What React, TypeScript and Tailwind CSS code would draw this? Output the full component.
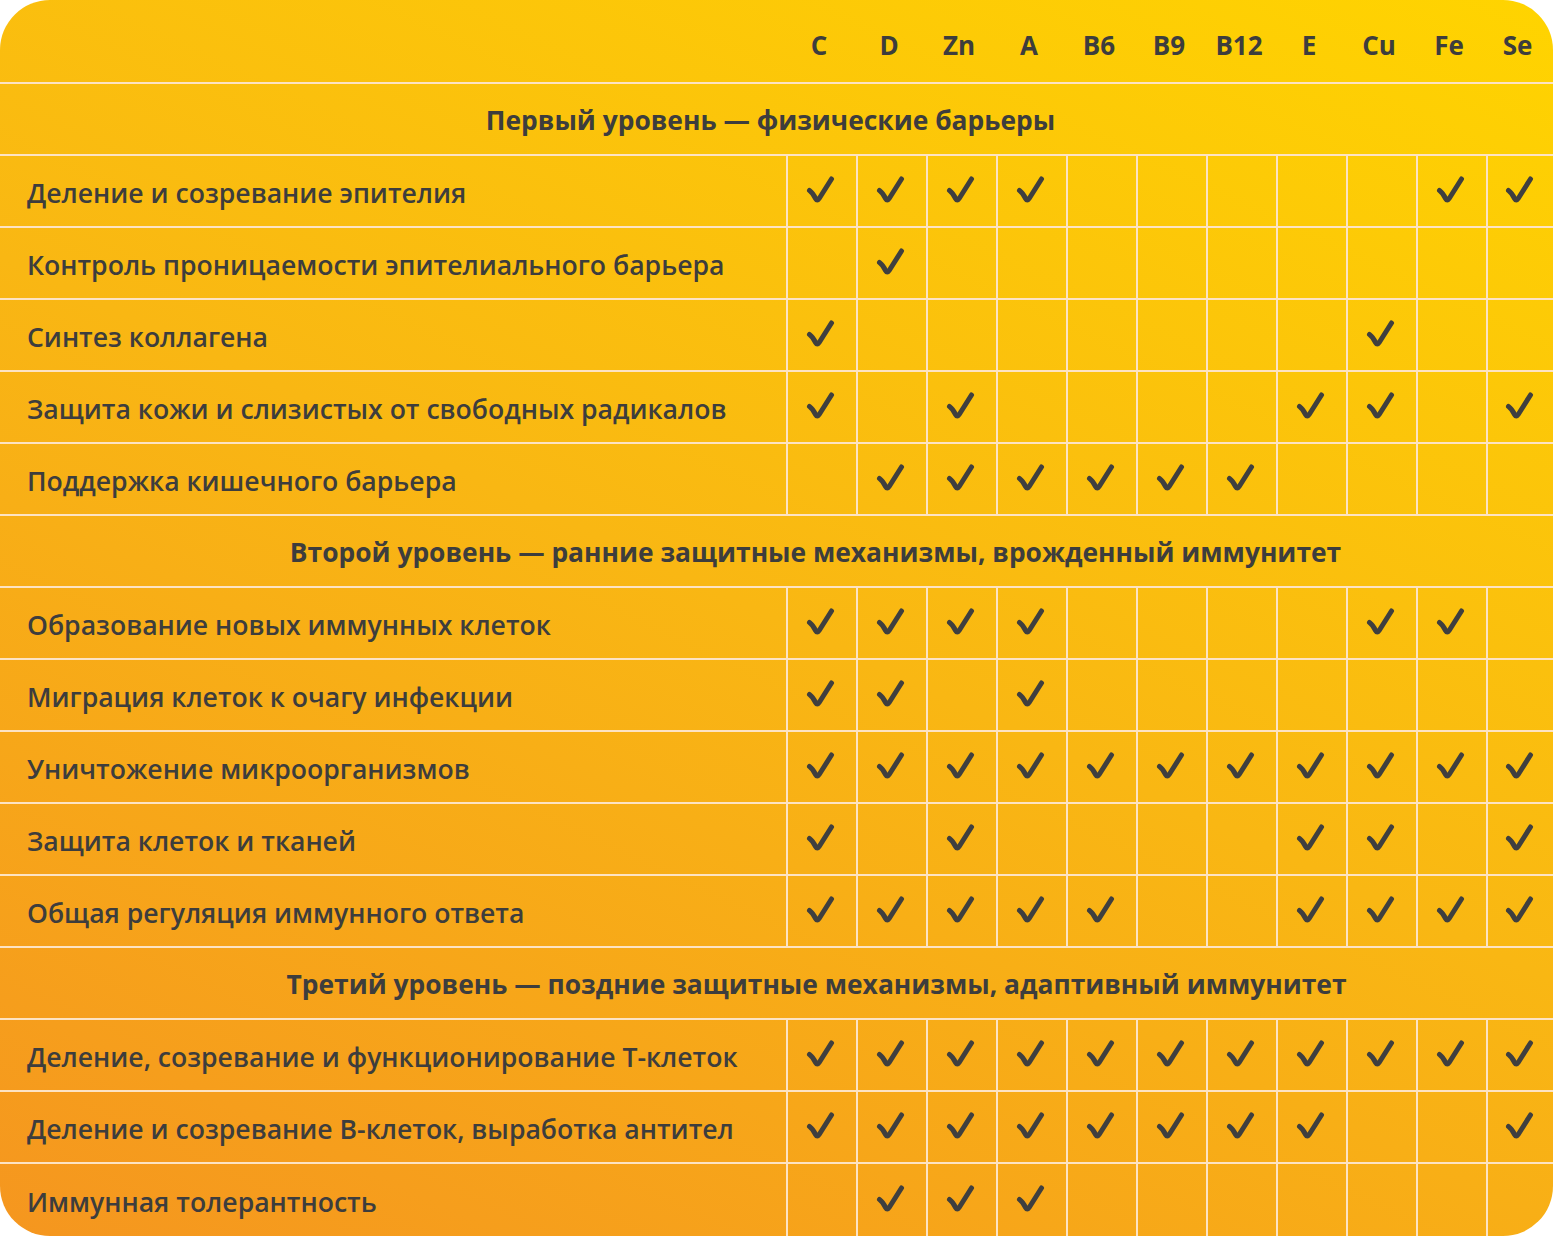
const COLS = ["C", "D", "Zn", "A", "B6", "B9", "B12", "E", "Cu", "Fe", "Se"];

type Row = { label: string; marks: string[] };
type Section = { title: string; shift: string; rows: Row[] };

const ALL = COLS;

const SECTIONS: Section[] = [
  {
    title: "Первый уровень — физические барьеры",
    shift: "pr-[12px]",
    rows: [
      { label: "Деление и созревание эпителия", marks: ["C", "D", "Zn", "A", "Fe", "Se"] },
      { label: "Контроль проницаемости эпителиального барьера", marks: ["D"] },
      { label: "Синтез коллагена", marks: ["C", "Cu"] },
      { label: "Защита кожи и слизистых от свободных радикалов", marks: ["C", "Zn", "E", "Cu", "Se"] },
      { label: "Поддержка кишечного барьера", marks: ["D", "Zn", "A", "B6", "B9", "B12"] },
    ],
  },
  {
    title: "Второй уровень — ранние защитные механизмы, врожденный иммунитет",
    shift: "pl-[78px]",
    rows: [
      { label: "Образование новых иммунных клеток", marks: ["C", "D", "Zn", "A", "Cu", "Fe"] },
      { label: "Миграция клеток к очагу инфекции", marks: ["C", "D", "A"] },
      { label: "Уничтожение микроорганизмов", marks: ALL },
      { label: "Защита клеток и тканей", marks: ["C", "Zn", "E", "Cu", "Se"] },
      { label: "Общая регуляция иммунного ответа", marks: ["C", "D", "Zn", "A", "B6", "E", "Cu", "Fe", "Se"] },
    ],
  },
  {
    title: "Третий уровень — поздние защитные механизмы, адаптивный иммунитет",
    shift: "pl-[80px]",
    rows: [
      { label: "Деление, созревание и функционирование Т-клеток", marks: ALL },
      { label: "Деление и созревание В-клеток, выработка антител", marks: ["C", "D", "Zn", "A", "B6", "B9", "B12", "E", "Se"] },
      { label: "Иммунная толерантность", marks: ["D", "Zn", "A"] },
    ],
  },
];

function Check() {
  return (
    <svg width="30" height="30" viewBox="0 0 30 30" className="-translate-x-[2px] -translate-y-[1px]">
      <path
        d="M4.5 15.5 Q8 18 10.5 23.5 Q12.2 26.6 14.2 23.5 L26.5 4"
        fill="none"
        stroke="#3f3f3f"
        strokeWidth="5"
        strokeLinecap="round"
        strokeLinejoin="round"
      />
    </svg>
  );
}

function HeaderRow() {
  return (
    <div className="flex h-[84px] border-b-2 border-[#fde3c3]">
      <div className="w-[786px] shrink-0" />
      {COLS.map((c, i) => (
        <div
          key={c}
          className={
            i === COLS.length - 1
              ? "flex flex-1 items-center justify-center pt-[8px] pl-[2px] pr-[6px] text-[26px] font-bold"
              : "flex w-[70px] shrink-0 items-center justify-center pt-[8px] pl-[2px] pr-[6px] text-[26px] font-bold"
          }
        >
          {c}
        </div>
      ))}
    </div>
  );
}

function DataRow({ row, last }: { row: Row; last: boolean }) {
  return (
    <div className={last ? "flex h-[72px]" : "flex h-[72px] border-b-2 border-[#fde3c3]"}>
      <div className="flex w-[786px] shrink-0 items-center pl-[27px] pt-[5px] text-[26.6px] font-semibold">
        {row.label}
      </div>
      {COLS.map((c, i) => (
        <div
          key={c}
          className={
            i === COLS.length - 1
              ? "flex flex-1 items-center justify-center border-l-2 border-[#fde3c3]"
              : "flex w-[70px] shrink-0 items-center justify-center border-l-2 border-[#fde3c3]"
          }
        >
          {row.marks.includes(c) && <Check />}
        </div>
      ))}
    </div>
  );
}

export default function App() {
  return (
    <div className="min-h-screen bg-white">
      <div
        className="w-[1553px] h-[1236px] overflow-hidden rounded-[50px] bg-[linear-gradient(205deg,#ffd400_0%,#f9b713_50%,#f5961f_100%)] text-[#3d3d3d]"
        style={{ fontFamily: '"Open Sans", "Noto Sans", sans-serif' }}
      >
        <HeaderRow />
        {SECTIONS.map((s, si) => (
          <div key={s.title}>
            <div
              className={`flex h-[72px] items-center justify-center border-b-2 border-[#fde3c3] pt-[4px] text-[26.4px] font-bold ${s.shift}`}
            >
              {s.title}
            </div>
            {s.rows.map((r, ri) => (
              <DataRow
                key={r.label}
                row={r}
                last={si === SECTIONS.length - 1 && ri === s.rows.length - 1}
              />
            ))}
          </div>
        ))}
      </div>
    </div>
  );
}
